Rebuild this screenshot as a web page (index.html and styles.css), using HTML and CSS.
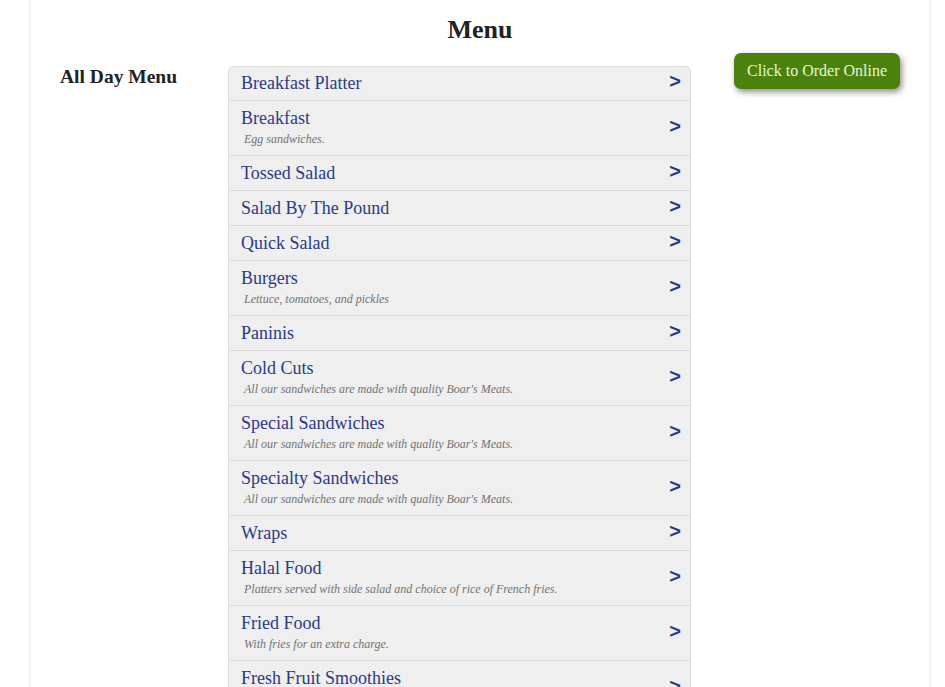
FILE: index.html
```html
<!DOCTYPE html>
<html>
<head>
<meta charset="utf-8">
<title>Menu</title>
<link rel="stylesheet" href="styles.css">
</head>
<body>
<div class="page">
  <h1 class="title">Menu</h1>
  <div class="layout">
    <h2 class="section">All Day Menu</h2>
    <ul class="list">
      <li class="row"><div class="info"><div class="name">Breakfast Platter</div></div><span class="arrow">&gt;</span></li>
      <li class="row"><div class="info"><div class="name">Breakfast</div><div class="desc">Egg sandwiches.</div></div><span class="arrow">&gt;</span></li>
      <li class="row"><div class="info"><div class="name">Tossed Salad</div></div><span class="arrow">&gt;</span></li>
      <li class="row"><div class="info"><div class="name">Salad By The Pound</div></div><span class="arrow">&gt;</span></li>
      <li class="row"><div class="info"><div class="name">Quick Salad</div></div><span class="arrow">&gt;</span></li>
      <li class="row"><div class="info"><div class="name">Burgers</div><div class="desc">Lettuce, tomatoes, and pickles</div></div><span class="arrow">&gt;</span></li>
      <li class="row"><div class="info"><div class="name">Paninis</div></div><span class="arrow">&gt;</span></li>
      <li class="row"><div class="info"><div class="name">Cold Cuts</div><div class="desc">All our sandwiches are made with quality Boar's Meats.</div></div><span class="arrow">&gt;</span></li>
      <li class="row"><div class="info"><div class="name">Special Sandwiches</div><div class="desc">All our sandwiches are made with quality Boar's Meats.</div></div><span class="arrow">&gt;</span></li>
      <li class="row"><div class="info"><div class="name">Specialty Sandwiches</div><div class="desc">All our sandwiches are made with quality Boar's Meats.</div></div><span class="arrow">&gt;</span></li>
      <li class="row"><div class="info"><div class="name">Wraps</div></div><span class="arrow">&gt;</span></li>
      <li class="row"><div class="info"><div class="name">Halal Food</div><div class="desc">Platters served with side salad and choice of rice of French fries.</div></div><span class="arrow">&gt;</span></li>
      <li class="row"><div class="info"><div class="name">Fried Food</div><div class="desc">With fries for an extra charge.</div></div><span class="arrow">&gt;</span></li>
      <li class="row"><div class="info"><div class="name">Fresh Fruit Smoothies</div><div class="desc">&nbsp;</div></div><span class="arrow">&gt;</span></li>
    </ul>
    <div class="side">
      <a class="order" href="#">Click to Order Online</a>
    </div>
  </div>
</div>
</body>
</html>
```

FILE: styles.css
```css
html, body {
  margin: 0;
  padding: 0;
  background: #ffffff;
}
body {
  font-family: "Liberation Serif", "Times New Roman", serif;
  color: #222;
}
.page {
  margin: 0 14px 0 29px;
  border-left: 2px solid #f0f0f0;
  border-right: 2px solid #f0f0f0;
  padding: 15px 29px 40px 29px;
  min-height: 800px;
}
.title {
  margin: 0 0 8px 0;
  font-size: 26px;
  line-height: 30px;
  font-weight: bold;
  text-align: center;
  color: #222;
}
.layout {
  display: grid;
  grid-template-columns: 168px 463px 1fr;
  align-items: start;
}
.section {
  margin: 13px 0 0 0;
  font-size: 19.5px;
  line-height: 22px;
  font-weight: bold;
  color: #222;
}
.list {
  list-style: none;
  margin: 13px 0 0 0;
  padding: 0;
  border: 1px solid #dedede;
  border-bottom: none;
  border-radius: 6px 6px 0 0;
  background: #efefef;
}
.row {
  display: flex;
  align-items: center;
  justify-content: space-between;
  padding: 7px 9px 6px 12px;
  border-top: 1px solid #dcdcdc;
}
.row:first-child {
  border-top: none;
  padding-top: 6px;
}
.name {
  font-size: 18px;
  line-height: 21px;
  color: #2b3a86;
}
.desc {
  font-size: 12px;
  line-height: 20px;
  font-style: italic;
  color: #727272;
  padding-left: 3px;
}
.arrow {
  font-family: "Liberation Sans", Arial, sans-serif;
  font-weight: bold;
  font-size: 20px;
  line-height: 14px;
  color: #2b3a86;
  margin-bottom: 6px;
}
.side {
  display: flex;
  justify-content: flex-end;
}
.order {
  display: inline-block;
  background: #4a820c;
  color: #eaf6d6;
  text-decoration: none;
  font-size: 16px;
  line-height: 20px;
  padding: 8px 13px;
  border-radius: 7px;
  box-shadow: 2px 3px 6px rgba(0, 0, 0, 0.45);
}
```
